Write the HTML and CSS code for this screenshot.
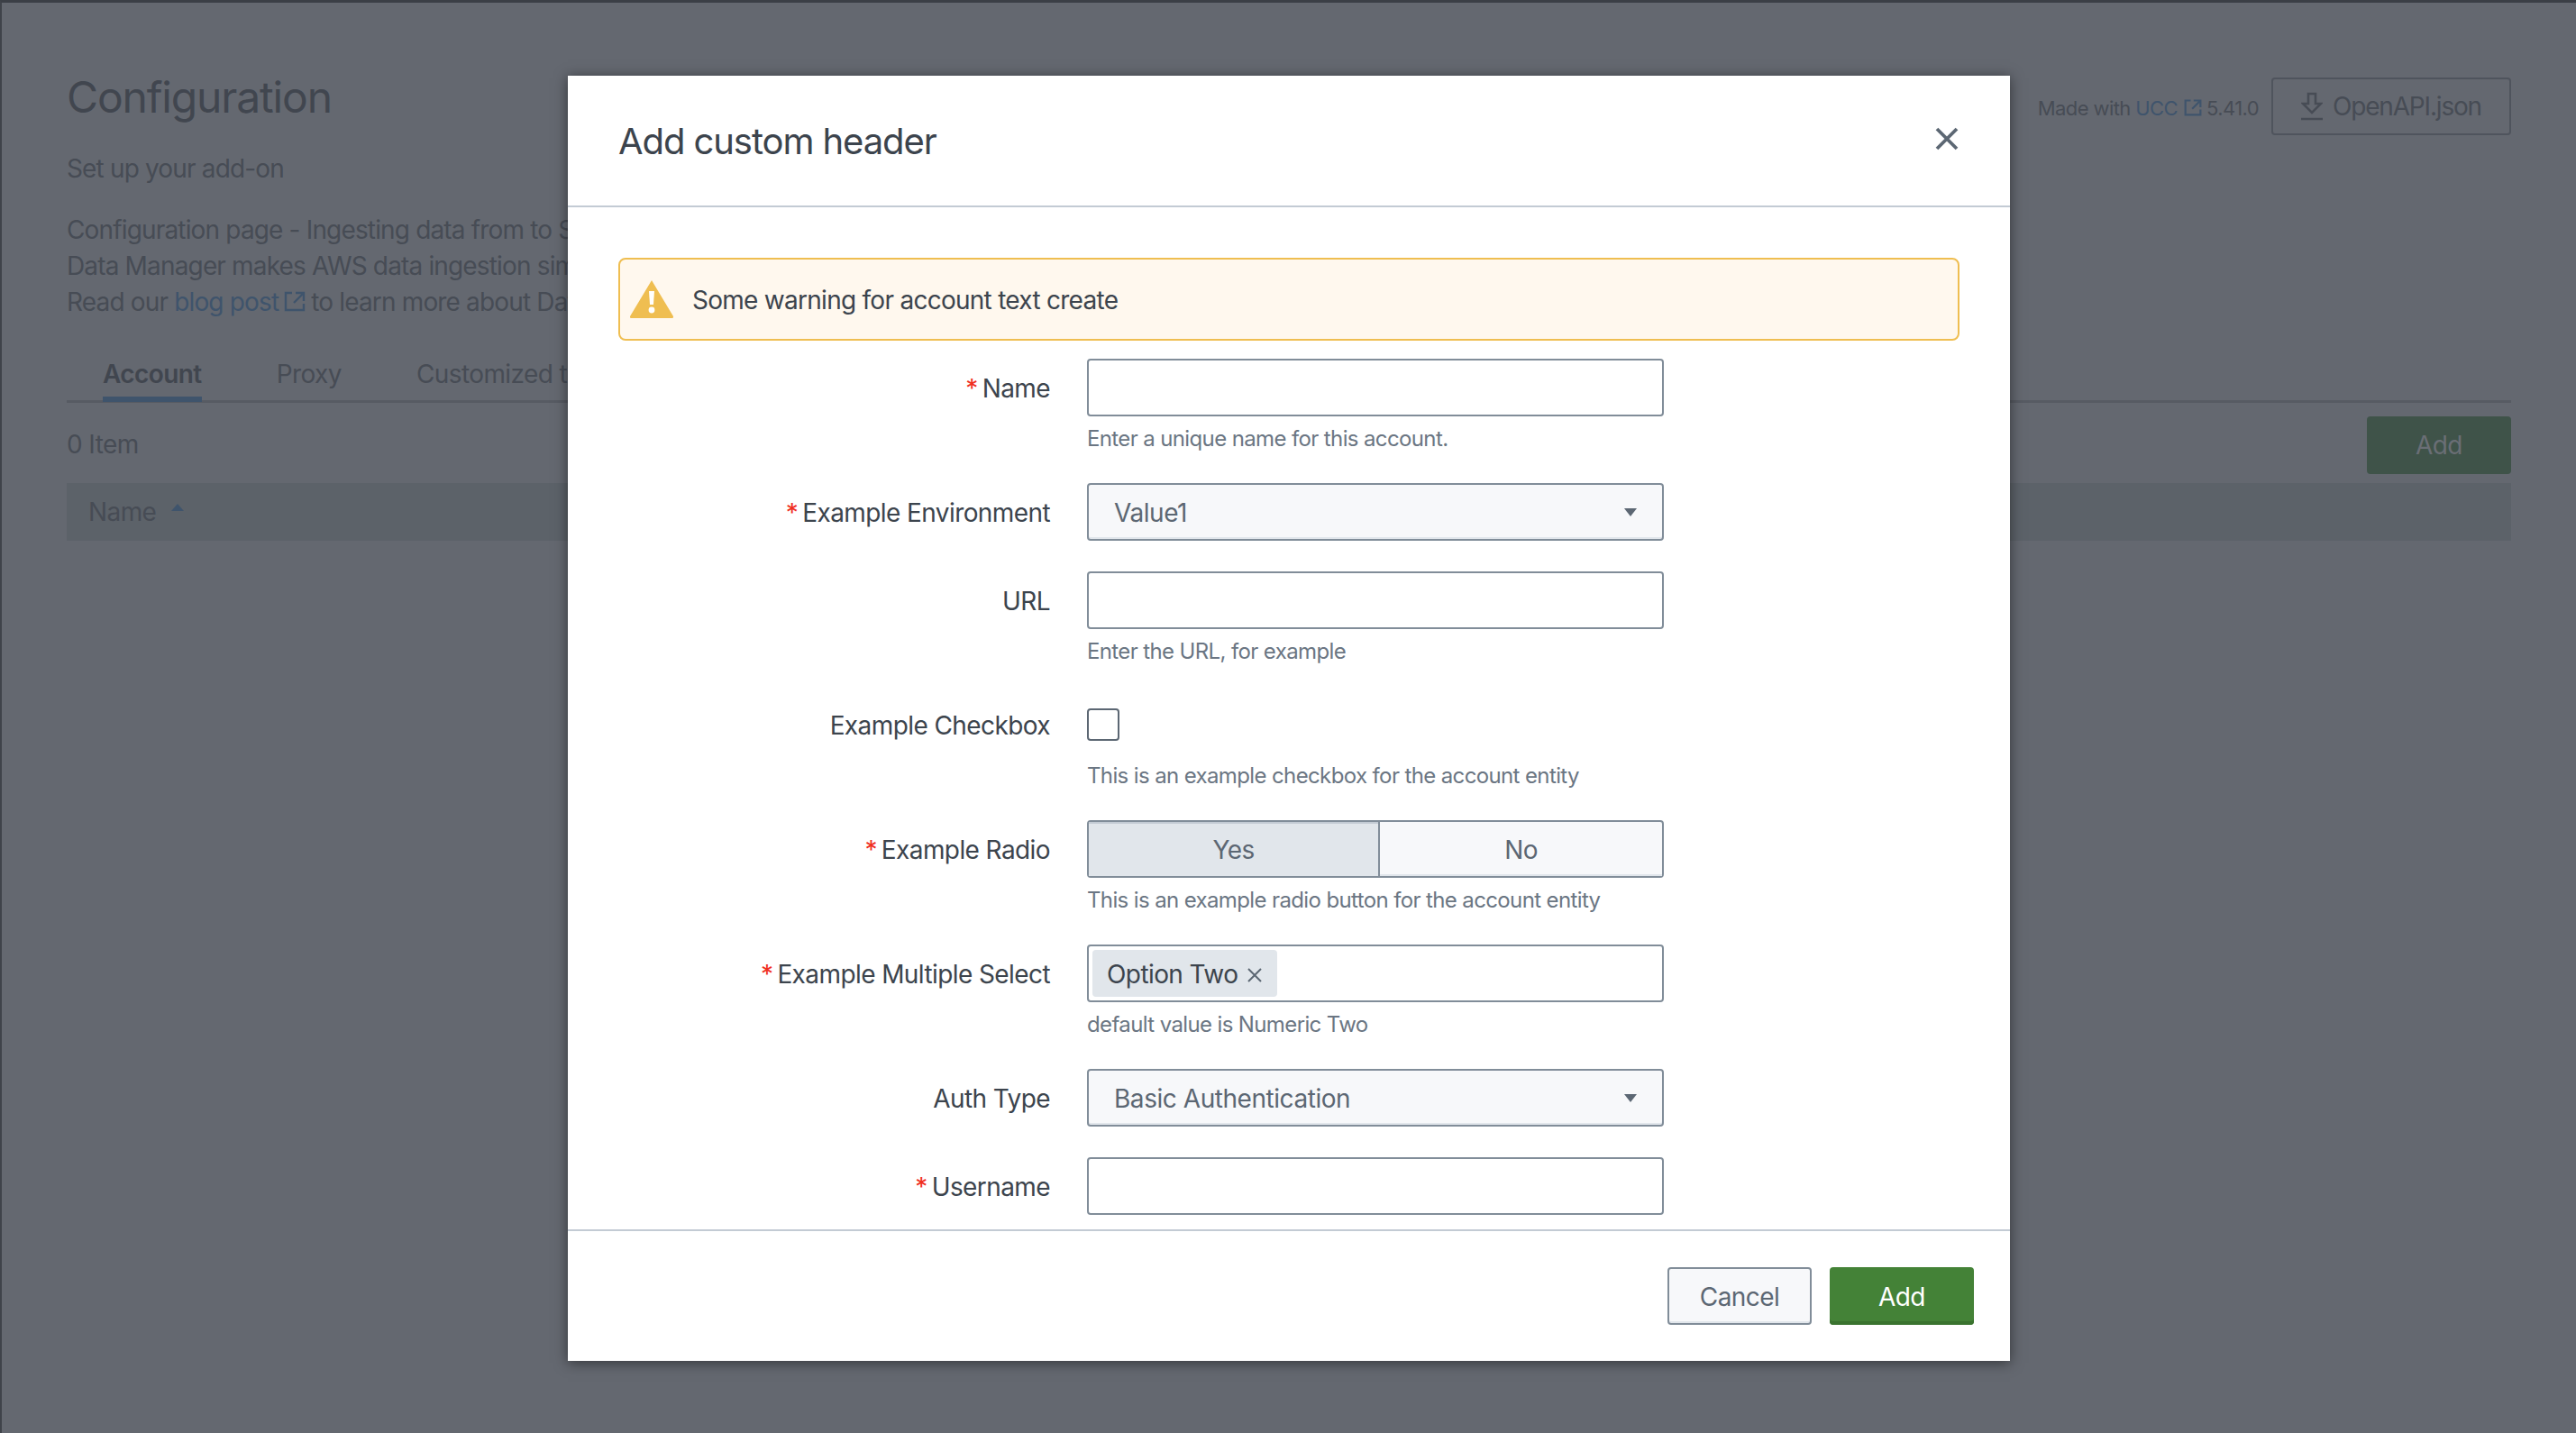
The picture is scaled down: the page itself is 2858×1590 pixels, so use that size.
FILE: index.html
```html
<!DOCTYPE html>
<html lang="en">
<head>
<meta charset="utf-8">
<title>Configuration</title>
<link rel="stylesheet" href="styles.css">
</head>
<body>
<div class="page">
  <header class="page-head">
    <div class="page-intro">
      <h1 class="page-title">Configuration</h1>
      <p class="page-sub">Set up your add-on</p>
      <p class="page-desc">Configuration page - Ingesting data from to Splunk using Data Manager.<br>Data Manager makes AWS data ingestion simpler, faster and more secure.<br>Read our <a class="link">blog post<svg class="ext" viewBox="0 0 24 24"><path d="M9 3H2v19h20v-7M13 3h9v9M22 3 11 14" fill="none" stroke="currentColor" stroke-width="2.4"/></svg></a>to learn more about Data Manager.</p>
    </div>
    <div class="page-tools">
      <span class="made">Made with <a class="link">UCC<svg class="ext ext-sm" viewBox="0 0 24 24"><path d="M9 3H2v19h20v-7M13 3h9v9M22 3 11 14" fill="none" stroke="currentColor" stroke-width="2.6"/></svg></a>5.41.0</span>
      <div class="btn-openapi"><svg class="dl" viewBox="0 0 24 32"><path d="M8 2h8v11h6L12 23 2 13h6z M0 30h24" fill="none" stroke="currentColor" stroke-width="2.6"/></svg><span class="openapi-text">OpenAPI.json</span></div>
    </div>
  </header>
  <nav class="tabs">
    <span class="tab tab-on">Account</span>
    <span class="tab">Proxy</span>
    <span class="tab">Customized tab</span>
  </nav>
  <div class="list-bar">
    <span class="item-count">0 Item</span>
    <div class="btn-add-bg">Add</div>
  </div>
  <div class="table-head"><span>Name</span><i class="sort"></i></div>
</div>

<section class="modal">
  <div class="modal-head">
    <h2 class="modal-title">Add custom header</h2>
    <svg class="close" viewBox="0 0 26 26"><path d="M2 2l22 22M24 2 2 24" fill="none" stroke="currentColor" stroke-width="3.8"/></svg>
  </div>
  <div class="modal-body">
    <div class="warning">
      <svg class="warn-icon" viewBox="0 0 48 42"><path d="M24 0 48 40a1.500 1.500 0 0 1-1.500 2h-45A1.500 1.500 0 0 1 0 40z" fill="#efbe51"/><path d="M21 12h6l-1 15h-4z" fill="#fff"/><circle cx="24" cy="33" r="3.400" fill="#fff"/></svg>
      <span class="warn-text">Some warning for account text create</span>
    </div>
    <div class="row">
      <label class="lbl"><b class="req">*</b>Name</label>
      <div class="ctl"><div class="input"></div><p class="help">Enter a unique name for this account.</p></div>
    </div>
    <div class="row">
      <label class="lbl"><b class="req">*</b>Example Environment</label>
      <div class="ctl"><div class="select"><span>Value1</span><i class="caret"></i></div></div>
    </div>
    <div class="row">
      <label class="lbl">URL</label>
      <div class="ctl"><div class="input"></div><p class="help">Enter the URL, for example</p></div>
    </div>
    <div class="row">
      <label class="lbl">Example Checkbox</label>
      <div class="ctl"><div class="check-wrap"><span class="check"></span></div><p class="help">This is an example checkbox for the account entity</p></div>
    </div>
    <div class="row">
      <label class="lbl"><b class="req">*</b>Example Radio</label>
      <div class="ctl"><div class="radio"><span class="radio-yes">Yes</span><span class="radio-no">No</span></div><p class="help">This is an example radio button for the account entity</p></div>
    </div>
    <div class="row">
      <label class="lbl"><b class="req">*</b>Example Multiple Select</label>
      <div class="ctl"><div class="input multi"><span class="chip">Option Two<svg class="chip-x" viewBox="0 0 16 16"><path d="M1 1l14 14M15 1 1 15" fill="none" stroke="currentColor" stroke-width="2"/></svg></span></div><p class="help">default value is Numeric Two</p></div>
    </div>
    <div class="row">
      <label class="lbl">Auth Type</label>
      <div class="ctl"><div class="select"><span>Basic Authentication</span><i class="caret"></i></div></div>
    </div>
    <div class="row">
      <label class="lbl"><b class="req">*</b>Username</label>
      <div class="ctl"><div class="input"></div></div>
    </div>
  </div>
  <div class="modal-foot">
    <div class="btn btn-cancel">Cancel</div>
    <div class="btn btn-primary">Add</div>
  </div>
</section>
</body>
</html>
```
FILE: styles.css
```css
* { box-sizing: border-box; }
html, body { margin: 0; height: 100%; }
body {
  width: 2858px;
  height: 1590px;
  overflow: hidden;
  position: relative;
  background: #646870;
  font-family: Inter, "Liberation Sans", sans-serif;
  font-size: 28px;
  letter-spacing: -0.021em;
  color: #474c55;
}
h1, h2, p { margin: 0; font-weight: 400; }
.page {
  height: 100%;
  border-top: 3px solid #3b3f46;
  border-left: 2px solid #3f434a;
  padding: 0 72px 0 72px;
}
.page-head { display: flex; justify-content: space-between; height: 335px; padding-top: 73px; }
.page-title { font-size: 48px; line-height: 64px; letter-spacing: -0.024em; color: #41464f; }
.page-sub { margin-top: 27px; line-height: 40px; letter-spacing: -0.03em; }
.page-desc { margin-top: 28px; line-height: 40px; letter-spacing: -0.03em; white-space: nowrap; }
.link { color: #3f546c; }
.ext { width: 24px; height: 24px; margin: 0 6px 0 6px; vertical-align: -1px; }
.ext-sm { width: 20px; height: 20px; margin: 0 5px 0 7px; }
.page-tools { display: flex; align-items: flex-start; gap: 14px; padding-top: 10px; }
.made { font-size: 22px; line-height: 64px; padding-top: 2px; color: #474c55; }
.btn-openapi {
  display: flex; align-items: center; justify-content: center; gap: 11px;
  width: 266px; height: 64px;
  border: 2px solid #4f545d; border-radius: 4px;
  color: #474c55;
}
.openapi-text { letter-spacing: -0.042em; }
.dl { width: 24px; height: 32px; }
.tabs {
  display: flex; height: 69px; margin-top: 40px; padding-left: 40px; gap: 83px;
  border-bottom: 3px solid #575b63;
  line-height: 42px;
}
.tab { height: 68px; padding-top: 16px; }
.tab-on { font-weight: 600; color: #41464f; border-bottom: 6px solid #3f546c; }
.list-bar { display: flex; justify-content: space-between; align-items: center; height: 64px; margin-top: 15px; }
.item-count { margin-top: -2px; }
.btn-add-bg {
  width: 160px; height: 64px; display: flex; align-items: center; justify-content: center;
  background: #3f5349; border-radius: 4px; color: #6a6e75;
}
.table-head {
  display: flex; align-items: center; height: 64px; margin-top: 10px; padding-left: 24px;
  background: #5c6269;
}
.sort {
  width: 0; height: 0; margin: -10px 0 0 17px;
  border-left: 7px solid transparent; border-right: 7px solid transparent;
  border-bottom: 8px solid #3f546c;
}
.modal {
  position: absolute; left: 630px; top: 84px;
  width: 1600px; height: 1426px;
  display: flex; flex-direction: column;
  background: #fff;
  box-shadow: 0 2px 14px rgba(0, 0, 0, .5);
  color: #3c444d;
}
.modal-head {
  display: flex; justify-content: space-between; align-items: center;
  height: 146px; flex: none; padding: 0 56px;
  border-bottom: 2px solid #c3cbd4;
}
.modal-title { font-size: 40px; line-height: 48px; margin-top: 2px; letter-spacing: -0.027em; }
.close { width: 26px; height: 26px; color: #5c6773; margin: -4px 1px 0 0; }
.modal-body { flex: 1; overflow: hidden; padding: 56px 56px 0; }
.warning {
  display: flex; align-items: center; gap: 21px;
  height: 92px; padding-left: 12px; margin-bottom: 20px;
  background: #fff8ee; border: 2px solid #efbe51; border-radius: 8px;
}
.warn-icon { width: 48px; height: 42px; margin-left: -1px; }
.warn-text { letter-spacing: -0.026em; padding-top: 1px; }
.row { display: flex; margin-bottom: 34px; }
.lbl { flex: none; width: 479px; height: 64px; margin-right: 41px; padding-top: 1px; line-height: 64px; text-align: right; white-space: nowrap; }
.req { color: #f02f1f; font-weight: 400; margin-right: 5px; }
.ctl { width: 640px; }
.input {
  height: 64px; background: #fff;
  border: 2px solid #818d99; border-radius: 4px;
}
.multi { display: flex; align-items: center; padding-left: 4px; }
.chip {
  display: flex; align-items: center; gap: 8px; height: 52px; padding: 2px 16px 0 16px;
  background: #e1e6eb; border-radius: 4px; color: #3c444d;
}
.chip-x { width: 18px; height: 16px; color: #5c6773; margin: 2px 0 0 2px; }
.select {
  display: flex; align-items: center; justify-content: space-between;
  height: 64px; padding: 2px 26px 0 28px;
  background: #f7f8fa; border: 2px solid #818d99; border-radius: 4px;
  box-shadow: inset 0 -2px 0 #e1e6eb; color: #5c6773;
  letter-spacing: -0.016em;
}
.caret {
  width: 0; height: 0; margin: -2px 2px 0 0;
  border-left: 7px solid transparent; border-right: 7px solid transparent;
  border-top: 9px solid #5c6773;
}
.check-wrap { display: flex; align-items: center; height: 64px; }
.check { width: 36px; height: 36px; background: #fff; border: 2px solid #5c6773; border-radius: 4px; }
.radio {
  display: flex; height: 64px; background: #f7f8fa;
  border: 2px solid #818d99; border-radius: 4px; color: #5c6773;
}
.radio span { display: flex; align-items: center; justify-content: center; padding-top: 2px; }
.radio-yes { width: 323px; background: #e1e6eb; border-right: 2px solid #818d99; box-shadow: inset 0 2px 0 #c3cbd4; }
.radio-no { flex: 1; box-shadow: inset 0 -2px 0 #e1e6eb; }
.help { height: 40px; padding-top: 9px; font-size: 24px; line-height: 32px; letter-spacing: -0.026em; color: #6b7683; white-space: nowrap; }
.modal-foot {
  display: flex; justify-content: flex-end; gap: 20px;
  height: 146px; flex: none; padding: 40px 40px 0 0;
  border-top: 2px solid #c3cbd4;
}
.btn {
  width: 160px; height: 64px; display: flex; align-items: center; justify-content: center;
  padding-top: 2px; border-radius: 4px;
}
.btn-cancel { background: #f7f8fa; border: 2px solid #818d99; box-shadow: inset 0 -2px 0 #e1e6eb; color: #5c6773; }
.btn-primary { background: #448237; box-shadow: inset 0 -4px 0 #3a732f; color: #fff; }
```
